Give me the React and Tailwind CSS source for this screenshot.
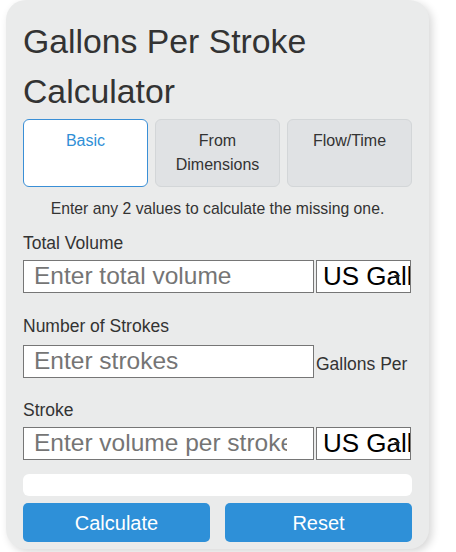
import React from "react";

const font = { fontFamily: '"Liberation Sans", Arial, sans-serif' };

function UnitSelect() {
  return (
    <div className="relative ml-[2px] h-[33px] w-[95px] overflow-hidden border border-[#767676] bg-white">
      <div className="absolute left-[6px] top-[0px] whitespace-nowrap text-[26px] leading-[31px] text-black">
        US Gallons
      </div>
      <div className="absolute right-[10px] top-[14px] h-0 w-0 border-l-[3px] border-r-[3px] border-t-[5px] border-l-transparent border-r-transparent border-t-[#222]" />
    </div>
  );
}

function TextInput({ placeholder }) {
  return (
    <input
      className="h-[33px] w-[291px] border border-[#767676] bg-white pl-[10px] pr-[26px] text-[24.5px] text-black outline-none placeholder:text-[#757575]"
      placeholder={placeholder}
      style={font}
    />
  );
}

export default function App() {
  return (
    <div className="min-h-[552px] bg-white" style={font}>
      <div className="ml-[6px] w-[423px] rounded-[20px] bg-[#eaebeb] px-[17px] pb-[7px] pt-[16px] shadow-[3px_3px_8px_rgba(0,0,0,0.16)]">
        <h1 className="text-[33.75px] font-normal leading-[50px] text-[#333]">
          Gallons Per Stroke
          <br />
          Calculator
        </h1>

        <div className="mt-[3px] flex gap-[7px]">
          <div className="h-[68px] w-[125px] rounded-[6px] border border-[#3a8fd6] bg-white pt-[9px] text-center text-[16px] leading-[24px] text-[#2f8fd6]">
            Basic
          </div>
          <div className="h-[68px] w-[125px] rounded-[6px] border border-[#d3d6d8] bg-[#e0e2e4] pt-[9px] text-center text-[16px] leading-[24px] text-[#333]">
            From
            <br />
            Dimensions
          </div>
          <div className="h-[68px] w-[125px] rounded-[6px] border border-[#d3d6d8] bg-[#e0e2e4] pt-[9px] text-center text-[16px] leading-[24px] text-[#333]">
            Flow/Time
          </div>
        </div>

        <p className="mt-[12px] text-center text-[15.75px] leading-[20px] text-[#333]">
          Enter any 2 values to calculate the missing one.
        </p>

        <div className="mt-[14px] text-[17.5px] leading-[20px] text-[#333]">Total Volume</div>
        <div className="mt-[7px] flex">
          <TextInput placeholder="Enter total volume" />
          <UnitSelect />
        </div>

        <div className="mt-[23px] text-[17.5px] leading-[20px] text-[#333]">Number of Strokes</div>
        <div className="mt-[9px] flex items-end">
          <TextInput placeholder="Enter strokes" />
          <span className="ml-[2px] whitespace-nowrap pb-[4px] text-[17.5px] leading-[20px] text-[#333]">
            Gallons Per
          </span>
        </div>

        <div className="mt-[22px] text-[17.5px] leading-[20px] text-[#333]">Stroke</div>
        <div className="mt-[7px] flex">
          <TextInput placeholder="Enter volume per stroke" />
          <UnitSelect />
        </div>

        <div className="mt-[14px] h-[22px] w-[389px] rounded-[6px] bg-white" />

        <div className="mt-[7px] flex gap-[15px]">
          <button className="h-[39px] w-[187px] rounded-[5px] bg-[#2e90d8] text-[20px] text-white">
            Calculate
          </button>
          <button className="h-[39px] w-[187px] rounded-[5px] bg-[#2e90d8] text-[20px] text-white">
            Reset
          </button>
        </div>
      </div>
    </div>
  );
}
